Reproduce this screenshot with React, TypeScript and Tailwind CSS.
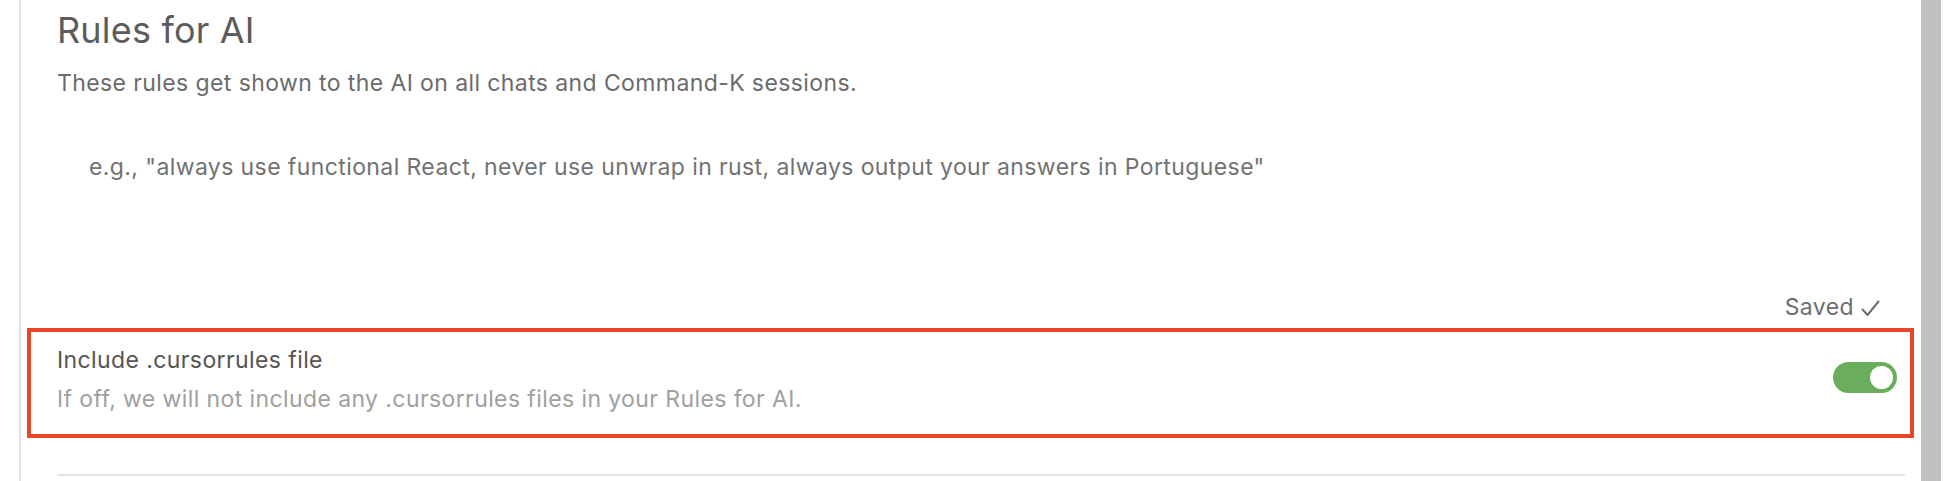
import React from "react";

export default function App() {
  const font = { fontFamily: "Inter, 'Noto Sans', Arial, sans-serif" };
  return (
    <div className="w-[1957px] h-[481px] flex bg-white overflow-hidden" style={font}>
      <div className="w-[19px] shrink-0" />
      <div className="w-[2px] shrink-0 bg-[#e2e2e2]" />
      <div className="w-[1900px] shrink-0 flex flex-col">
        <div className="pl-[36px] pt-[10px]">
          <h1 className="text-[36px] leading-[40px] font-normal text-[#5c5c5c] tracking-[0.2px]">Rules for AI</h1>
          <p className="mt-[19px] text-[23px] leading-[28px] tracking-[0.4px] text-[#6b6b6b]">
            These rules get shown to the AI on all chats and Command-K sessions.
          </p>
          <div className="mt-[56px] pl-[32px] text-[23px] leading-[28px] tracking-[0.4px] text-[#727272]">
            e.g., "always use functional React, never use unwrap in rust, always output your answers in Portuguese"
          </div>
        </div>
        <div className="mt-[112px] flex justify-end pr-[41px]">
          <span className="flex items-center gap-[7px] text-[23px] leading-[28px] tracking-[0.4px] text-[#6e6e6e]">
            Saved
            <svg width="19" height="17" viewBox="0 0 19 17" className="mt-[3px]" fill="none" stroke="#6e6e6e" strokeWidth="2" strokeLinecap="round" strokeLinejoin="round">
              <polyline points="1.5,9.5 6.5,15 17.5,1.5" />
            </svg>
          </span>
        </div>
        <div className="mt-[7px] ml-[6px] w-[1887px] h-[110px] border-[4px] border-[#e8452b] flex items-start justify-between pl-[26px] pr-[13px] pt-[14px]">
          <div className="flex flex-col">
            <div className="text-[23px] leading-[28px] tracking-[0.4px] text-[#555555]">Include .cursorrules file</div>
            <div className="mt-[11px] text-[23px] leading-[28px] tracking-[0.4px] text-[#a0a0a0]">
              If off, we will not include any .cursorrules files in your Rules for AI.
            </div>
          </div>
          <div className="mt-[16px] w-[64px] h-[31px] rounded-full bg-[#69ad5d] flex items-center justify-end pr-[4px]">
            <div className="w-[23px] h-[23px] rounded-full bg-white" />
          </div>
        </div>
        <div className="mt-[36px] ml-[36px] w-[1848px] h-[2px] bg-[#e2e2e2]" />
      </div>
      <div className="w-[20px] shrink-0 bg-[#c1c1c1]" />
      <div className="flex-1 bg-white" />
    </div>
  );
}
